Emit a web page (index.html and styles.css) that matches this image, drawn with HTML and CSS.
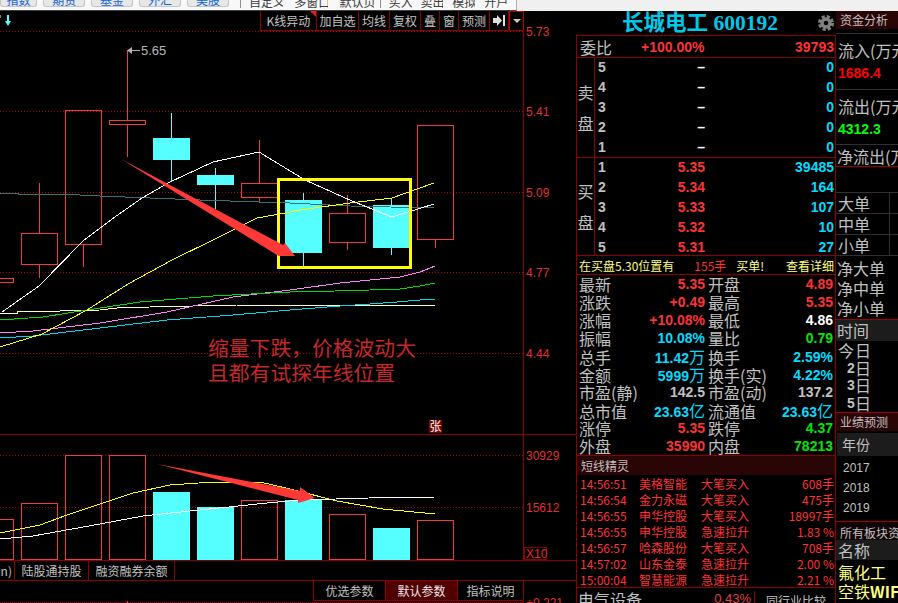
FILE: index.html
```html
<!DOCTYPE html>
<html lang="zh-CN">
<head>
    <meta charset="UTF-8">
    <title>长城电工 600192</title>
    <link rel="stylesheet" href="styles.css">
</head>
<body>
    <div class="topbar">
        <div class="top-left">
            <span class="tool-btn">指数</span>
            <span class="tool-btn">期货</span>
            <span class="tool-btn">基金</span>
            <span class="tool-btn">外汇</span>
            <span class="tool-btn">美股</span>
            <span class="tool-link first">自定义</span>
            <span class="tool-link">多窗口</span>
            <span class="tool-link">默认页</span>
            <span class="tool-link trade">买入</span>
            <span class="tool-link small">卖出</span>
            <span class="tool-link small">模拟</span>
            <span class="tool-link small">开户</span>
        </div>
    </div>

    <div class="main">
        <div class="chart-col">
            <div class="price-panel">
                <svg class="chart" width="576" height="424" viewBox="0 11 576 424">
                    <!-- grid -->
                    <g class="grid">
                        <line x1="0" y1="31.5" x2="523" y2="31.5"/>
                        <line x1="0" y1="111.5" x2="523" y2="111.5"/>
                        <line x1="0" y1="192.5" x2="523" y2="192.5"/>
                        <line x1="0" y1="272.5" x2="523" y2="272.5"/>
                        <line x1="0" y1="353.5" x2="523" y2="353.5"/>
                    </g>
                    <g class="frame">
                        <line x1="523.5" y1="11" x2="523.5" y2="435"/>
                        <line x1="0" y1="434.5" x2="576" y2="434.5"/>
                    </g>
                    <!-- candles -->
                    <g class="up">
                        <rect x="-10.5" y="278.5" width="24" height="4"/>
                        <path d="M39.5 183V233M39.5 264V278"/>
                        <rect x="21.5" y="233.5" width="36" height="31"/>
                        <path d="M83.5 244V267"/>
                        <rect x="65.5" y="110.5" width="36" height="134"/>
                        <path d="M127.5 50V120M127.5 125V157"/>
                        <rect x="109.5" y="120.5" width="36" height="4"/>
                        <path d="M259.5 140V183M259.5 198V203"/>
                        <rect x="241.5" y="183.5" width="36" height="14"/>
                        <path d="M347.5 195V213M347.5 242V250"/>
                        <rect x="329.5" y="213.5" width="36" height="29"/>
                        <path d="M435.5 239V248"/>
                        <rect x="417.5" y="125.5" width="36" height="114"/>
                    </g>
                    <g class="down">
                        <path d="M171.5 113V182M215.5 168V209M303.5 193V266M391.5 198V255"/>
                        <rect x="153" y="138" width="37" height="22"/>
                        <rect x="197" y="175" width="37" height="10"/>
                        <rect x="285" y="200" width="37" height="53"/>
                        <rect x="373" y="205" width="37" height="43"/>
                    </g>
                    <!-- moving averages -->
                    <g class="ma">
                        <polyline class="ma-teal" points="0,193 18,193 18,194 60,194 100,196 150,198 200,200 260,202 290,203 310,204 350,206 390,207 434,208"/>
                        <polyline class="ma-cream" points="0,313 17,313 17,311 60,311 100,310 117,308 150,307 193,306 237,305 435,305"/>
                        <polyline class="ma-cyan" points="0,338 33,336 100,328 167,320 233,315 290,310 340,306 370,304 397,302 420,300 435,299"/>
                        <polyline class="ma-pink" points="0,333 33,331 100,323 167,312 233,297 290,290 340,283 380,279 400,277 420,272 435,266"/>
                        <polyline class="ma-green" points="0,320 43,317 87,310 140,302 213,296 290,292 335,291 370,290 400,289 420,286 435,283"/>
                        <polyline class="ma-yellow" points="0,347 42,334 87,310 128,284 172,260 213,240 257,218 280,214 300,210 350,203 392,198 434,183"/>
                        <polyline class="ma-white" points="2,312 39,286 83,241 112,219 142,198 170,182 213,162 259,152 305,180 352,201 392,217 434,204"/>
                    </g>
                    <rect class="mark-box" x="278.5" y="179.5" width="132" height="88"/>
                    <polygon class="arrow" points="121,159 283,245 285,243 295,256 279,256 277,255"/>
                    <!-- high price tag -->
                    <line class="tag-line" x1="131" y1="50.5" x2="140" y2="50.5"/>
                    <polygon class="tag-head" points="127,50.5 132,47 132,54"/>
                    <text class="tag-text" x="141" y="55">5.65</text>
                    <!-- annotation -->
                    <text class="note" x="208" y="356">缩量下跌，价格波动大</text>
                    <text class="note" x="208" y="381">且都有试探年线位置</text>
                    <rect class="zhang-bg" x="429" y="420" width="13" height="13"/>
                    <text class="zhang" x="435.5" y="431">张</text>
                    <!-- price axis -->
                    <g class="axis">
                        <text x="526" y="36">5.73</text>
                        <text x="526" y="116">5.41</text>
                        <text x="526" y="197">5.09</text>
                        <text x="526" y="277">4.77</text>
                        <text x="526" y="358">4.44</text>
                    </g>
                    <!-- little flag and arrow in the corner -->
                    <line class="corner" x1="0.5" y1="15" x2="0.5" y2="18"/>
                    <polygon class="down-mark" points="7,15 9,15 9,21 11,21 8,26 5,21 7,21"/>
                </svg>
                <div class="chart-tools">
                    <span class="chart-tool flagged">K线异动</span>
                    <span class="chart-tool">加自选</span>
                    <span class="chart-tool">均线</span>
                    <span class="chart-tool">复权</span>
                    <span class="chart-tool narrow">叠</span>
                    <span class="chart-tool narrow">窗</span>
                    <span class="chart-tool">预测</span>
                    <span class="chart-tool icon-tool">
                        <svg width="13" height="11" viewBox="0 0 13 11"><polygon class="tool-icon" points="0,3 4,3 4,0 9,5.5 4,11 4,8 0,8"/><rect class="tool-icon" x="10" y="0" width="2" height="11"/></svg>
                    </span>
                    <span class="chart-tool drop-tool"><span class="drop-arrow"></span></span>
                </div>
            </div>

            <svg class="chart" width="576" height="125" viewBox="0 435 576 125">
                <g class="grid">
                    <line x1="0" y1="455.5" x2="523" y2="455.5"/>
                    <line x1="0" y1="507.5" x2="523" y2="507.5"/>
                </g>
                <line class="frame-line" x1="523.5" y1="435" x2="523.5" y2="560"/>
                <g class="up">
                    <rect x="-10.5" y="519.5" width="24" height="40"/>
                    <rect x="21.5" y="503.5" width="36" height="56"/>
                    <rect x="65.5" y="455.5" width="36" height="104"/>
                    <rect x="109.5" y="455.5" width="36" height="104"/>
                    <rect x="241.5" y="500.5" width="36" height="59"/>
                    <rect x="329.5" y="514.5" width="36" height="45"/>
                    <rect x="417.5" y="520.5" width="36" height="39"/>
                </g>
                <g class="down">
                    <rect x="153" y="492" width="37" height="68"/>
                    <rect x="197" y="507" width="37" height="53"/>
                    <rect x="285" y="500" width="37" height="60"/>
                    <rect x="373" y="528" width="37" height="32"/>
                </g>
                <g class="ma">
                    <polyline class="ma-yellow" points="0,533 40,525 67,515 100,504 133,493 170,485 213,482 260,482 290,489 337,501 383,509 435,514"/>
                    <polyline class="ma-white" points="0,539 33,536 100,524 143,516 200,510 267,503 300,500 336,499 369,498 435,497"/>
                </g>
                <polygon class="arrow" points="157,464 300,491 300,487 315,498 298,503 298,500"/>
                <g class="axis">
                    <text x="526" y="460">30929</text>
                    <text x="526" y="512">15612</text>
                    <rect class="x10-box" x="524.5" y="547.5" width="22" height="12"/>
                    <text x="526" y="558">X10</text>
                </g>
            </svg>

            <div class="tabs">
                <span class="tab clipped">n)</span>
                <span class="tab t-hold">陆股通持股</span>
                <span class="tab t-margin">融资融券余额</span>
            </div>

            <div class="sub-head">
                <div class="sub-left">
                    <div class="params">
                        <span class="param">优选参数</span>
                        <span class="param active">默认参数</span>
                        <span class="param last">指标说明</span>
                    </div>
                    <div class="dotline"></div>
                    <span class="tick"></span>
                </div>
                <div class="sub-axis">+0.221</div>
            </div>
        </div>

        <div class="quote">
            <div class="quote-title">
                <span class="stock-name">长城电工 600192</span>
                <svg class="gear" width="16" height="16" viewBox="0 0 16 16">
                    <circle class="gear-teeth" cx="8" cy="8" r="6.5"/>
                    <circle class="gear-ring" cx="8" cy="8" r="4"/>
                </svg>
            </div>
            <div class="quote-body">
                <div class="ratio-row">
                    <span class="lbl">委比</span>
                    <span class="num red ratio-pct">+100.00%</span>
                    <span class="num red ratio-vol">39793</span>
                </div>

                <div class="book sell">
                    <div class="book-side"><span>卖</span><span>盘</span></div>
                    <div class="book-rows">
                        <div class="book-row"><span class="num gray">5</span><span class="num white">–</span><span class="num cyan">0</span></div>
                        <div class="book-row"><span class="num gray">4</span><span class="num white">–</span><span class="num cyan">0</span></div>
                        <div class="book-row"><span class="num gray">3</span><span class="num white">–</span><span class="num cyan">0</span></div>
                        <div class="book-row"><span class="num gray">2</span><span class="num white">–</span><span class="num cyan">0</span></div>
                        <div class="book-row"><span class="num gray">1</span><span class="num white">–</span><span class="num cyan">0</span></div>
                    </div>
                </div>
                <div class="book buy">
                    <div class="book-side"><span>买</span><span>盘</span></div>
                    <div class="book-rows">
                        <div class="book-row"><span class="num gray">1</span><span class="num red">5.35</span><span class="num cyan">39485</span></div>
                        <div class="book-row"><span class="num gray">2</span><span class="num red">5.34</span><span class="num cyan">164</span></div>
                        <div class="book-row"><span class="num gray">3</span><span class="num red">5.33</span><span class="num cyan">107</span></div>
                        <div class="book-row"><span class="num gray">4</span><span class="num red">5.32</span><span class="num cyan">10</span></div>
                        <div class="book-row"><span class="num gray">5</span><span class="num red">5.31</span><span class="num cyan">27</span></div>
                    </div>
                </div>

                <div class="info-row">
                    <span class="info-main">在买盘5.30位置有</span>
                    <span class="info-hands">155手</span>
                    <span class="info-bill">买单!</span>
                    <span class="info-more">查看详细</span>
                </div>

                <div class="stats">
                    <div class="stat"><div class="pair"><span class="lbl">最新</span><span class="num red">5.35</span></div><div class="pair"><span class="lbl">开盘</span><span class="num red">4.89</span></div></div>
                    <div class="stat"><div class="pair"><span class="lbl">涨跌</span><span class="num red">+0.49</span></div><div class="pair"><span class="lbl">最高</span><span class="num red">5.35</span></div></div>
                    <div class="stat"><div class="pair"><span class="lbl">涨幅</span><span class="num red">+10.08%</span></div><div class="pair"><span class="lbl">最低</span><span class="num white">4.86</span></div></div>
                    <div class="stat"><div class="pair"><span class="lbl">振幅</span><span class="num cyan">10.08%</span></div><div class="pair"><span class="lbl">量比</span><span class="num green">0.79</span></div></div>
                    <div class="stat"><div class="pair"><span class="lbl">总手</span><span class="num cyan">11.42<span class="unit">万</span></span></div><div class="pair"><span class="lbl">换手</span><span class="num cyan">2.59%</span></div></div>
                    <div class="stat"><div class="pair"><span class="lbl">金额</span><span class="num cyan">5999<span class="unit">万</span></span></div><div class="pair"><span class="lbl">换手(实)</span><span class="num cyan">4.22%</span></div></div>
                    <div class="stat"><div class="pair"><span class="lbl">市盈(静)</span><span class="num gray">142.5</span></div><div class="pair"><span class="lbl">市盈(动)</span><span class="num gray">137.2</span></div></div>
                    <div class="stat"><div class="pair"><span class="lbl">总市值</span><span class="num cyan">23.63<span class="unit">亿</span></span></div><div class="pair"><span class="lbl">流通值</span><span class="num cyan">23.63<span class="unit">亿</span></span></div></div>
                    <div class="stat"><div class="pair"><span class="lbl">涨停</span><span class="num red">5.35</span></div><div class="pair"><span class="lbl">跌停</span><span class="num green">4.37</span></div></div>
                    <div class="stat"><div class="pair"><span class="lbl">外盘</span><span class="num red">35990</span></div><div class="pair"><span class="lbl">内盘</span><span class="num green">78213</span></div></div>
                </div>

                <div class="sprite-head">短线精灵</div>
                <div class="sprite">
                    <div class="sprite-row"><span>14:56:51</span><span>美格智能</span><span>大笔买入</span><span class="sprite-val">608手</span></div>
                    <div class="sprite-row"><span>14:56:54</span><span>金力永磁</span><span>大笔买入</span><span class="sprite-val">475手</span></div>
                    <div class="sprite-row"><span>14:56:55</span><span>申华控股</span><span>大笔买入</span><span class="sprite-val">18997手</span></div>
                    <div class="sprite-row"><span>14:56:55</span><span>申华控股</span><span>急速拉升</span><span class="sprite-val">1.83 %</span></div>
                    <div class="sprite-row"><span>14:56:57</span><span>哈森股份</span><span>大笔买入</span><span class="sprite-val">708手</span></div>
                    <div class="sprite-row"><span>14:57:02</span><span>山东金泰</span><span>急速拉升</span><span class="sprite-val">2.00 %</span></div>
                    <div class="sprite-row"><span>15:00:04</span><span>智慧能源</span><span>急速拉升</span><span class="sprite-val">2.21 %</span></div>
                </div>

                <div class="sector">
                    <span class="lbl">电气设备</span>
                    <span class="sector-pct">0.43%</span>
                    <span class="sector-link">同行业比较</span>
                </div>
            </div>
        </div>

        <div class="flow-col">
            <div class="band">资金分析</div>
            <div class="flow-block inflow">
                <div class="lbl">流入(万元</div>
                <div class="num flow-in">1686.4</div>
            </div>
            <div class="flow-block outflow">
                <div class="lbl">流出(万元</div>
                <div class="num flow-out">4312.3</div>
            </div>
            <div class="net lbl">净流出(万</div>

            <div class="orders">
                <div class="order lbl">大单</div>
                <div class="order lbl">中单</div>
                <div class="order lbl">小单</div>
            </div>
            <div class="net-orders">
                <div class="lbl">净大单</div>
                <div class="lbl">净中单</div>
                <div class="lbl">净小单</div>
            </div>

            <div class="gray-head lbl">时间</div>
            <div class="days">
                <div class="day lbl"><span class="day-n">今</span>日</div>
                <div class="day lbl"><span class="day-n num">2</span>日</div>
                <div class="day lbl"><span class="day-n num">3</span>日</div>
                <div class="day lbl"><span class="day-n num">5</span>日</div>
            </div>

            <div class="band forecast">业绩预测</div>
            <div class="year-head">年份</div>
            <div class="years">
                <div>2017</div>
                <div>2018</div>
                <div>2019</div>
            </div>

            <div class="band all-sectors">所有板块资金</div>
            <div class="name-head lbl">名称</div>
            <div class="sector-name">氟化工</div>
            <div class="sector-name">空铁<b>WIFI</b></div>
        </div>
    </div>
</body>
</html>
```

FILE: styles.css
```css
* {
    box-sizing: border-box;
}

body {
    margin: 0;
    width: 898px;
    height: 603px;
    overflow: hidden;
    background-color: #000;
    color: #c0c0c0;
    font-family: "Liberation Sans", "Noto Sans CJK SC", sans-serif;
}

/* top toolbar, cut off by the window */
.topbar {
    height: 11px;
    background-color: #f0f0f0;
    overflow: hidden;
}

.top-left {
    display: flex;
    width: 517px;
    height: 11px;
    background-color: #f8f8f8;
    border-right: 1px solid #b0b0b0;
    border-bottom: 1px solid #404040;
    font-family: "Noto Sans CJK SC", sans-serif;
    font-size: 12px;
    line-height: 12px;
}

.tool-btn {
    display: flex;
    justify-content: center;
    align-items: flex-end;
    width: 44px;
    height: 7px;
    margin-right: 6px;
    background-color: #e8e8e8;
    border: 1px solid #c4c4c4;
    border-top: none;
    border-radius: 0 0 3px 3px;
    color: #1466d8;
    overflow: hidden;
}

.tool-btn:first-child {
    width: 39px;
}

.tool-link {
    display: flex;
    align-items: flex-end;
    height: 8px;
    margin-right: 11px;
    color: #404040;
    white-space: nowrap;
    overflow: hidden;
}

.tool-link.first {
    margin-left: 5px;
    padding-left: 8px;
    border-left: 1px solid #909090;
}

.tool-link.trade {
    margin-left: -5px;
    padding-left: 8px;
    border-left: 1px solid #909090;
    margin-right: 9px;
}

.tool-link.small {
    margin-right: 9px;
}

/* three columns */
.main {
    display: flex;
    height: 592px;
}

.chart-col {
    width: 576px;
    flex-shrink: 0;
}

.price-panel {
    position: relative;
    height: 424px;
}

.chart {
    display: block;
}

.grid line {
    stroke: #b00000;
    stroke-width: 1;
    stroke-dasharray: 1 2;
}

.frame line,
.frame-line {
    stroke: #8c0000;
    stroke-width: 1;
}

.up rect,
.up path {
    fill: none;
    stroke: #f03c3c;
    stroke-width: 1;
    shape-rendering: crispEdges;
}

.down rect {
    fill: #55ffff;
    shape-rendering: crispEdges;
}

.down path {
    fill: none;
    stroke: #55ffff;
    stroke-width: 1;
    shape-rendering: crispEdges;
}

.ma polyline {
    fill: none;
    stroke-width: 1;
    shape-rendering: crispEdges;
}

.ma-white { stroke: #fff; }
.ma-yellow { stroke: #ffff00; }
.ma-teal { stroke: #3c7074; }
.ma-cream { stroke: #ffffc0; }
.ma-cyan { stroke: #00d8f0; }
.ma-pink { stroke: #ff80ff; }
.ma-green { stroke: #00e000; }

.mark-box {
    fill: none;
    stroke: #ffff00;
    stroke-width: 3;
    shape-rendering: crispEdges;
}

.arrow {
    fill: #ff3838;
}

.tag-line {
    stroke: #b0b0b0;
    stroke-width: 1;
}

.tag-head {
    fill: #b0b0b0;
}

.tag-text {
    fill: #b8b8b8;
    font-size: 13px;
}

.note {
    fill: #c42828;
    font-family: "Noto Sans CJK SC", sans-serif;
    font-size: 20.8px;
}

.zhang-bg {
    fill: #780000;
}

.zhang {
    fill: #fff;
    font-family: "Noto Sans CJK SC", sans-serif;
    font-size: 12px;
    text-anchor: middle;
}

.axis text {
    fill: #e03030;
    font-size: 12px;
}

.x10-box {
    fill: none;
    stroke: #8c0000;
    stroke-width: 1;
}

.corner {
    stroke: #3c9090;
    stroke-width: 1;
}

.down-mark {
    fill: #55ffff;
}

/* buttons lying over the price chart */
.chart-tools {
    position: absolute;
    top: 0;
    left: 260px;
    display: flex;
    height: 20px;
    background-color: #000;
    border-left: 1px solid #8c0000;
    border-bottom: 1px solid #8c0000;
    font-family: "Noto Sans CJK SC", sans-serif;
    font-size: 12px;
}

.chart-tool {
    display: flex;
    justify-content: center;
    align-items: center;
    width: 31px;
    border-right: 1px solid #8c0000;
    color: #c4c4c4;
}

.flagged {
    position: relative;
    width: 56px;
}

.flagged::after {
    content: "";
    position: absolute;
    top: 0;
    right: 0;
    border-top: 6px solid #e02020;
    border-left: 6px solid transparent;
}

.chart-tool:nth-child(2) {
    width: 42px;
}

.narrow {
    width: 19px;
}

.icon-tool {
    width: 19px;
}

.tool-icon {
    fill: #e0e0e0;
}

.drop-tool {
    width: 15px;
    border: 1px solid #c00000;
    border-bottom: none;
}

.drop-arrow {
    border-top: 4px solid #c8c8c8;
    border-left: 4px solid transparent;
    border-right: 4px solid transparent;
}

/* indicator tabs under the volume chart */
.tabs {
    display: flex;
    height: 21px;
    border-top: 1px solid #8c0000;
    border-bottom: 1px solid #8c0000;
    font-family: "Noto Sans CJK SC", sans-serif;
    font-size: 12px;
}

.tab {
    display: flex;
    justify-content: center;
    align-items: center;
    border-right: 1px solid #8c0000;
}

.clipped {
    width: 15px;
    justify-content: flex-end;
    padding-right: 2px;
}

.t-hold {
    width: 74px;
}

.t-margin {
    width: 86px;
}

.sub-head {
    display: flex;
    height: 22px;
}

.sub-left {
    position: relative;
    width: 523px;
}

.params {
    display: flex;
    width: 210px;
    height: 20px;
    margin-left: 313px;
    border-left: 1px solid #8c0000;
    border-bottom: 1px solid #8c0000;
    font-family: "Noto Sans CJK SC", sans-serif;
    font-size: 12px;
}

.param {
    display: flex;
    justify-content: center;
    align-items: center;
    width: 72px;
    border-right: 1px solid #8c0000;
}

.param.active {
    background-color: #500000;
    color: #e8e8e8;
}

.param.last {
    width: 65px;
    border-right: none;
}

.dotline {
    margin-top: 1px;
    border-top: 1px dotted #a00000;
}

.tick {
    position: absolute;
    left: 127px;
    top: 20px;
    width: 1px;
    height: 2px;
    background-color: #f03c3c;
}

.sub-axis {
    width: 53px;
    padding: 15px 0 0 2px;
    border-left: 1px solid #8c0000;
    color: #e03030;
    font-size: 12px;
    line-height: 14px;
    overflow: hidden;
}

/* quote panel */
.quote {
    width: 260px;
    flex-shrink: 0;
    font-family: "Noto Sans CJK SC", sans-serif;
}

.quote-title {
    position: relative;
    height: 24px;
    padding-left: 46px;
    line-height: 24px;
    font-family: "Liberation Serif", "Noto Sans CJK SC", serif;
    font-size: 21.5px;
    font-weight: bold;
}

.stock-name {
    color: #00c8e8;
    white-space: nowrap;
}

.gear {
    position: absolute;
    top: 4px;
    right: 2px;
}

.gear-teeth {
    fill: none;
    stroke: #808080;
    stroke-width: 3;
    stroke-dasharray: 3.1 2;
}

.gear-ring {
    fill: none;
    stroke: #808080;
    stroke-width: 3.5;
}

.quote-body {
    height: 568px;
    border-top: 1px solid #8c0000;
    border-left: 1px solid #8c0000;
    border-right: 1px solid #8c0000;
    overflow: hidden;
}

.lbl {
    font-family: "Noto Sans CJK SC", sans-serif;
    font-size: 16px;
    color: #c0c0c0;
    white-space: nowrap;
}

.num {
    font-family: "Liberation Sans", sans-serif;
    font-size: 14px;
    font-weight: bold;
    white-space: nowrap;
}

.red { color: #ff3232; }
.cyan { color: #00dcff; }
.green { color: #00e600; }
.white { color: #fff; }
.gray { color: #c0c0c0; }

.unit {
    font-family: "Noto Sans CJK SC", sans-serif;
    font-size: 16px;
    font-weight: normal;
}

.ratio-row {
    display: flex;
    align-items: center;
    height: 22px;
    padding: 0 1px 0 3px;
    border-bottom: 1px solid #8c0000;
}

.ratio-pct {
    margin-left: 29px;
}

.ratio-vol {
    margin-left: auto;
}

.book {
    display: flex;
    border-bottom: 1px solid #8c0000;
}

.book.sell {
    height: 100px;
}

.book.buy {
    height: 98px;
}

.book-side {
    display: flex;
    flex-direction: column;
    justify-content: center;
    align-items: center;
    gap: 15px;
    width: 18px;
    border-right: 1px solid #8c0000;
    font-size: 16px;
    line-height: 16px;
}

.book-rows {
    flex: 1;
    margin-top: -1px;
}

.book-row {
    display: grid;
    grid-template-columns: 10px 97px 1fr;
    align-items: center;
    height: 20px;
    padding: 0 1px 0 3px;
    text-align: right;
}

.book-row span:first-child {
    text-align: left;
}

.info-row {
    display: flex;
    align-items: center;
    height: 19px;
    padding: 0 1px 0 2px;
    border-bottom: 1px solid #8c0000;
    font-size: 12px;
    color: #ffff80;
}

.info-hands {
    margin-left: 20px;
    color: #ff3232;
}

.info-bill {
    margin-left: 10px;
}

.info-more {
    margin-left: auto;
}

.stats {
    height: 181px;
    border-bottom: 1px solid #8c0000;
}

.stat {
    display: grid;
    grid-template-columns: 129px 125px;
    height: 18px;
    padding-left: 2px;
}

.pair {
    display: flex;
    justify-content: space-between;
    align-items: center;
    line-height: 18px;
}

.pair:first-child {
    padding-right: 3px;
}

.sprite-head {
    height: 19px;
    padding-left: 4px;
    background-color: #2a0505;
    font-size: 12px;
    line-height: 19px;
}

.sprite {
    height: 113px;
    border-bottom: 1px solid #8c0000;
}

.sprite-row {
    display: grid;
    grid-template-columns: 59px 62px 1fr auto;
    align-items: center;
    height: 16px;
    padding: 0 1px 0 3px;
    color: #ff3232;
    font-size: 12px;
}

.sector {
    display: flex;
    padding-top: 3px;
    line-height: 16px;
}

.sector .lbl {
    padding-left: 1px;
}

.sector-pct {
    width: 55px;
    margin-left: 54px;
    color: #e04040;
    font-family: "Liberation Sans", sans-serif;
    font-size: 13px;
    text-align: right;
}

.sector-link {
    margin-left: 3px;
    padding: 2px 0 0 11px;
    border-left: 1px solid #8c0000;
    font-size: 12px;
}

/* money flow column */
.flow-col {
    flex: 1;
    overflow: hidden;
    font-family: "Noto Sans CJK SC", sans-serif;
}

.band {
    height: 18px;
    padding-left: 4px;
    background-color: #2a0505;
    font-size: 12px;
    line-height: 18px;
    white-space: nowrap;
}

.flow-block {
    padding-left: 2px;
    border-top: 1px solid #303030;
    border-bottom: 1px solid #303030;
}

.flow-block .lbl,
.net,
.gray-head {
    line-height: 16px;
}

.flow-block .num {
    margin-top: 7px;
    line-height: 16px;
}

.inflow {
    height: 57px;
    margin-top: 4px;
    padding-top: 8px;
}

.outflow {
    height: 55px;
    padding-top: 8px;
    border-top: none;
}

.flow-in { color: #ff0000; }
.flow-out { color: #00ff00; }

.net {
    height: 22px;
    padding: 3px 0 0 1px;
    border-bottom: 1px solid #a00000;
}

.orders {
    margin-top: 25px;
    border-top: 1px solid #303030;
}

.order {
    height: 21px;
    padding-left: 2px;
    border-bottom: 1px solid #303030;
    line-height: 20px;
    background: linear-gradient(#303030, #303030) 53px 0 / 1px 100% no-repeat;
}

.net-orders {
    height: 64px;
    padding-top: 2px;
    border-bottom: 1px solid #a00000;
}

.net-orders .lbl {
    height: 20px;
    line-height: 20px;
    padding-left: 1px;
}

.gray-head {
    height: 21px;
    padding-left: 1px;
    background-color: #1c1c1c;
    line-height: 21px;
}

.days {
    height: 72px;
    padding-top: 1px;
    border-bottom: 1px solid #a00000;
}

.day {
    display: flex;
    height: 17.5px;
    line-height: 17.5px;
}

.day-n {
    width: 19px;
    padding-left: 2px;
}

.day-n.num {
    padding-left: 11px;
}

.forecast {
    height: 18px;
}

.year-head {
    height: 23px;
    margin: 2px 0 0 1px;
    padding-left: 5px;
    background-color: #1c1c1c;
    font-size: 14px;
    line-height: 23px;
}

.years {
    height: 66px;
    padding: 2px 0 0 7px;
    font-family: "Liberation Sans", sans-serif;
    font-size: 12px;
    line-height: 20px;
    border-bottom: 1px solid #a00000;
}

.all-sectors {
    background-color: #120505;
    line-height: 22px;
}

.name-head {
    height: 20px;
    margin-bottom: 3px;
    padding-left: 2px;
    background-color: #1c1c1c;
    line-height: 20px;
}

.sector-name {
    height: 19px;
    padding-left: 2px;
    color: #ffff80;
    font-size: 16px;
    line-height: 19px;
    white-space: nowrap;
}
```
